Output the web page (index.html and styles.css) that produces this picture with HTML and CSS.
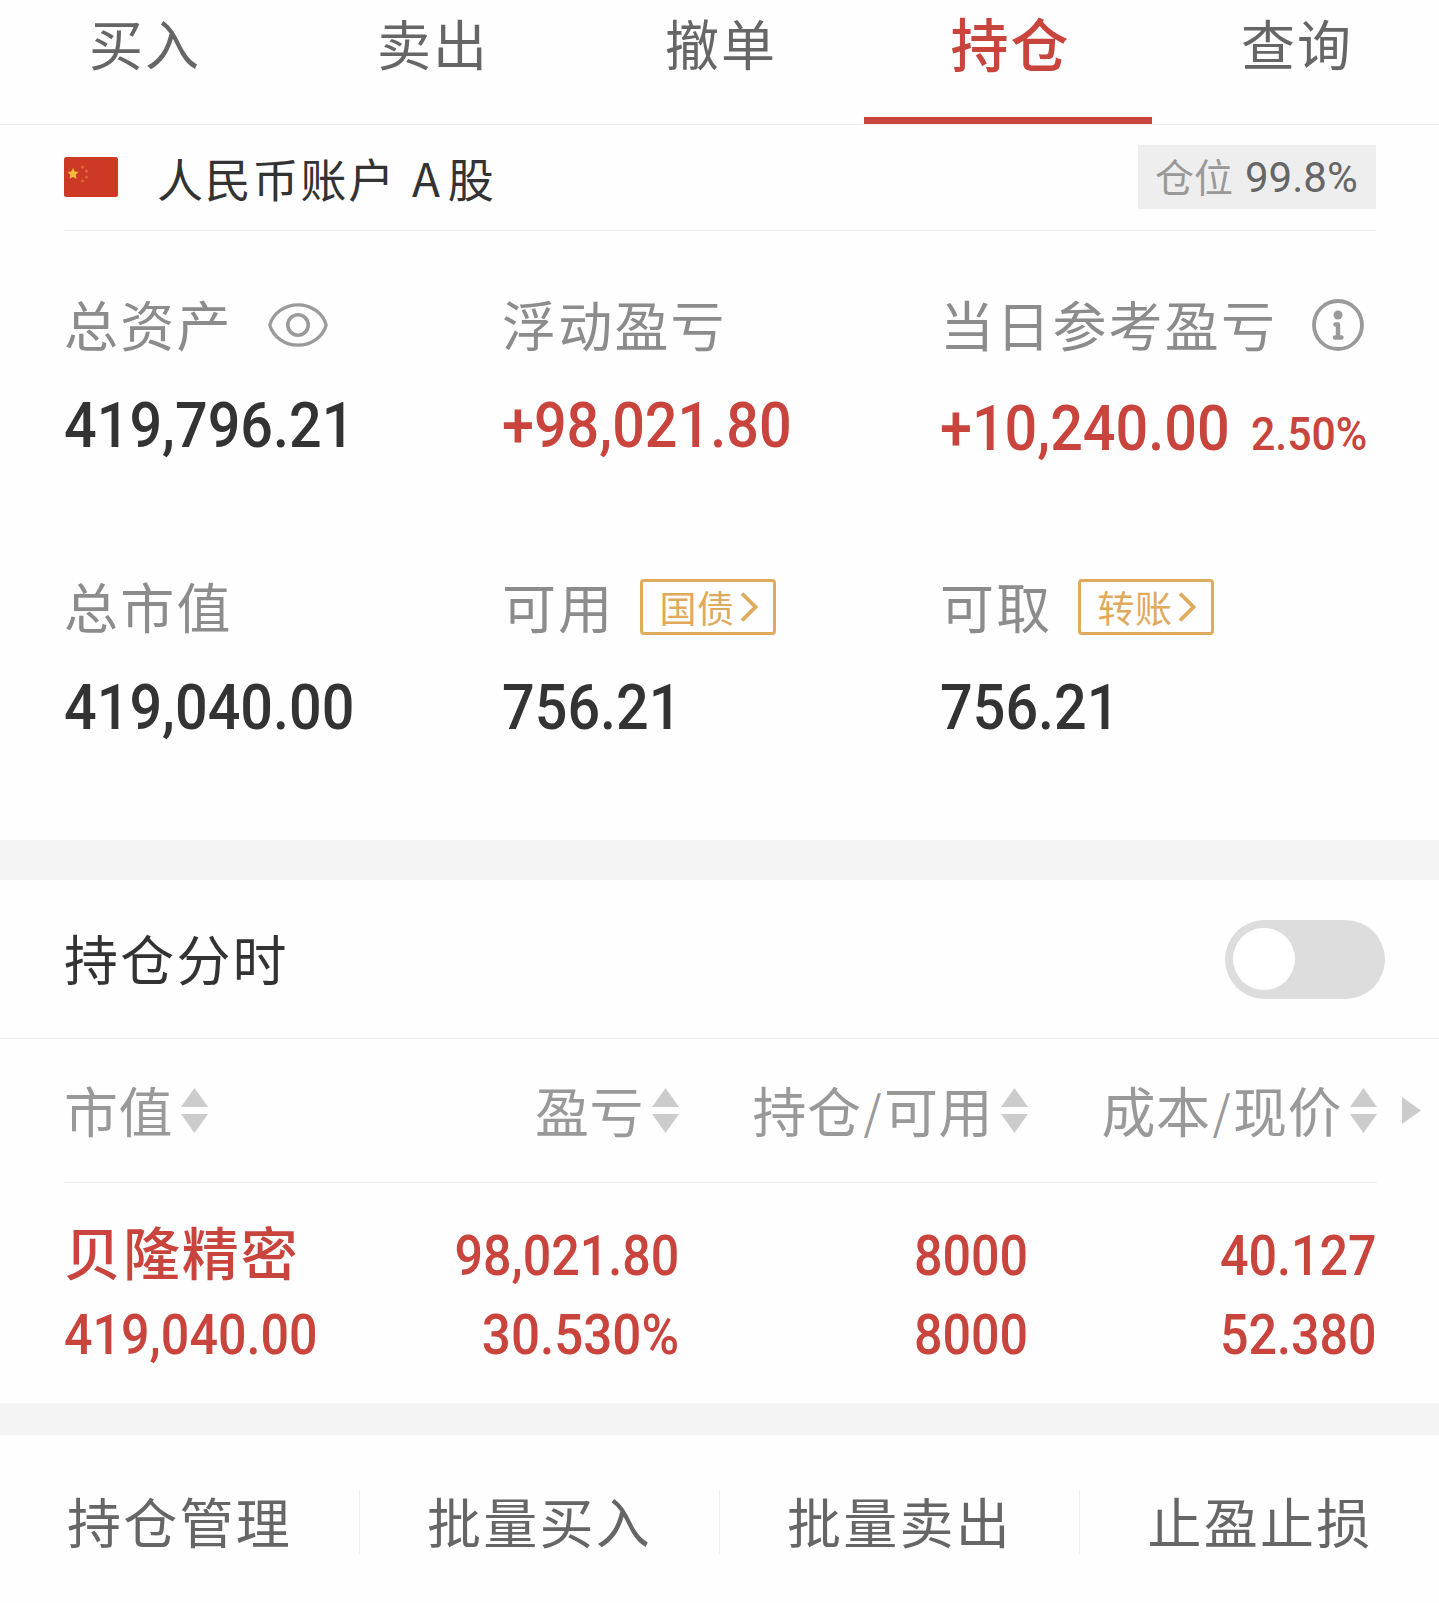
FILE: index.html
```html
<!DOCTYPE html>
<html lang="zh-CN">
<head>
<meta charset="utf-8">
<title>持仓</title>
<link rel="stylesheet" href="styles.css">
</head>
<body>
<svg width="0" height="0" class="defs" aria-hidden="true">
  <symbol id="sort" viewBox="0 0 27 45"><path d="M13.500 0 27 19H0zM0 26h27L13.500 45z" fill="currentColor"/></symbol>
  <symbol id="chevron" viewBox="0 0 18 30"><path d="M2 1.500 15.500 15 2 28.500" fill="none" stroke="currentColor" stroke-width="3.800"/></symbol>
</svg>

<nav class="tabs">
  <a class="tab">买入</a>
  <a class="tab">卖出</a>
  <a class="tab">撤单</a>
  <a class="tab active">持仓</a>
  <a class="tab">查询</a>
</nav>

<header class="account">
  <svg class="flag" viewBox="0 0 54 40">
    <rect width="54" height="40" rx="2.500" fill="#cc3a26"/>
    <path d="M9 11l1.700 3.600 3.900.5-2.900 2.700.8 4L9 19.900l-3.500 1.900.8-4L3.400 15.100l3.900-.5z" fill="#f6b93b"/>
    <g fill="#e0653a"><circle cx="18.500" cy="10" r="1.600"/><circle cx="22.500" cy="14" r="1.600"/><circle cx="22.500" cy="20" r="1.600"/><circle cx="18.500" cy="24" r="1.600"/></g>
  </svg>
  <h1 class="account-name">人民币账户<span class="latin">A</span>股</h1>
  <div class="position"><span class="position-label">仓位</span><span class="position-value">99.8%</span></div>
</header>

<section class="summary">
  <div class="stat">
    <div class="label">总资产
      <svg class="eye" viewBox="0 0 60 44" fill="none" stroke="#9a9a9a" stroke-width="3.200"><path d="M1.800 22C5 10 17 1.800 30 1.800S55 10 58.200 22C55 34 43 42.200 30 42.200S5 34 1.800 22z"/><circle cx="30" cy="22" r="10.200" stroke-width="3.600"/></svg>
    </div>
    <div class="value"><span class="num">419,796.21</span></div>
  </div>
  <div class="stat">
    <div class="label">浮动盈亏</div>
    <div class="value up"><span class="num">+98,021.80</span></div>
  </div>
  <div class="stat">
    <div class="label">当日参考盈亏
      <svg class="info" viewBox="0 0 52 52"><circle cx="26" cy="26" r="24" fill="none" stroke="#9a9a9a" stroke-width="3.800"/><circle cx="26" cy="16" r="4.500" fill="#9a9a9a"/><path d="M23.500 25.500H26V38M23 38.500h6.500" fill="none" stroke="#9a9a9a" stroke-width="4.400" stroke-linecap="round" stroke-linejoin="round"/></svg>
    </div>
    <div class="value up today"><span class="num">+10,240.00</span><span class="num rate">2.50%</span></div>
  </div>
  <div class="stat">
    <div class="label">总市值</div>
    <div class="value"><span class="num">419,040.00</span></div>
  </div>
  <div class="stat">
    <div class="label">可用 <a class="chip">国债<svg class="chevron"><use href="#chevron"/></svg></a></div>
    <div class="value"><span class="num">756.21</span></div>
  </div>
  <div class="stat">
    <div class="label">可取 <a class="chip">转账<svg class="chevron"><use href="#chevron"/></svg></a></div>
    <div class="value"><span class="num">756.21</span></div>
  </div>
</section>

<section class="intraday">
  <h2 class="intraday-title">持仓分时</h2>
  <div class="switch"><div class="knob"></div></div>
</section>

<section class="holdings">
  <div class="row head">
    <div class="cell">市值<svg class="sort"><use href="#sort"/></svg></div>
    <div class="cell">盈亏<svg class="sort"><use href="#sort"/></svg></div>
    <div class="cell">持仓<span class="slash">/</span>可用<svg class="sort"><use href="#sort"/></svg></div>
    <div class="cell">成本<span class="slash">/</span>现价<svg class="sort"><use href="#sort"/></svg></div>
    <svg class="more" viewBox="0 0 19 27"><path d="M0 0l19 13.500L0 27z" fill="#ccc"/></svg>
  </div>
  <div class="row item">
    <div class="cell"><span class="name">贝隆精密</span><span class="num">419,040.00</span></div>
    <div class="cell"><span class="num">98,021.80</span><span class="num percent">30.530%</span></div>
    <div class="cell"><span class="num">8000</span><span class="num">8000</span></div>
    <div class="cell"><span class="num">40.127</span><span class="num">52.380</span></div>
  </div>
</section>

<footer class="actions">
  <a class="action">持仓管理</a>
  <a class="action">批量买入</a>
  <a class="action">批量卖出</a>
  <a class="action">止盈止损</a>
</footer>
</body>
</html>
```
FILE: styles.css
```css
* { box-sizing: border-box; }

body {
  margin: 0;
  background: #fefefe;
  color: #333;
  font-family: "Noto Sans CJK SC", sans-serif;
  font-size: 54px;
}

h1, h2 { margin: 0; font-weight: 400; }
svg { display: block; flex: none; }
.defs { position: absolute; }

.tabs {
  display: grid;
  grid-template-columns: repeat(5, 288px);
  height: 125px;
  overflow: hidden;
  border-bottom: 1px solid #eee;
}
.tab {
  height: 124px;
  padding-left: 2px;
  line-height: 86px;
  letter-spacing: 2px;
  text-align: center;
  color: #666;
}
.tab.active {
  border-bottom: 7px solid #c9463f;
  padding-left: 5px;
  font-size: 58px;
  font-weight: 500;
  line-height: 84px;
  letter-spacing: 2px;
  color: #c8443c;
}

.account {
  display: flex;
  align-items: center;
  height: 106px;
  margin: 0 63px 0 64px;
  border-bottom: 1px solid #eee;
}
.flag { width: 54px; height: 40px; margin-top: -1px; }
.account-name {
  margin-left: 39px;
  font-size: 46px;
  line-height: 60px;
  letter-spacing: 1.800px;
  padding-bottom: 1px;
}
.latin { margin: 0 6px 0 16px; }
.position {
  display: flex;
  align-items: center;
  width: 238px;
  height: 64px;
  margin-left: auto;
  margin-top: -1px;
  padding-left: 17px;
  background: #eee;
  line-height: 60px;
}
.position-label { font-size: 39px; color: #999; padding-bottom: 4px; }
.position-value { margin: 2px 0 0 12px; font-family: Roboto, sans-serif; font-size: 42px; color: #666; }

.summary {
  display: grid;
  grid-template-columns: repeat(3, 438px);
  grid-template-rows: 282px 282px;
  height: 609px;
  padding: 64px 0 0 64px;
}
.label {
  display: flex;
  align-items: center;
  height: 60px;
  line-height: 54px;
  letter-spacing: 2.200px;
  padding-bottom: 3px;
  color: #8c8c8c;
  white-space: nowrap;
}
.eye { width: 60px; height: 44px; margin: 2px 0 0 35px; }
.info { width: 52px; height: 52px; margin: 2px 0 0 35px; }
.value { display: flex; margin-top: 34px; height: 74px; line-height: 74px; white-space: nowrap; }
.value.today { margin-top: 37px; align-items: baseline; }
.num {
  display: inline-block;
  font-family: Roboto, sans-serif;
  font-weight: 500;
  transform: scaleX(.913);
  transform-origin: left center;
}
.value .num { font-size: 63px; }
.value .rate { margin-left: -6px; font-size: 46px; transform: scaleX(.93); }
.up { color: #c8443c; }
.chip {
  display: flex;
  align-items: center;
  width: 136px;
  height: 56px;
  margin: 2px 0 0 26px;
  padding-left: 16px;
  border: 3px solid #e0aa5c;
  border-radius: 4px;
  font-size: 37px;
  line-height: 44px;
  letter-spacing: .5px;
  color: #e0aa5c;
}
.chevron { width: 18px; height: 30px; margin-left: 6px; }

.intraday {
  display: flex;
  align-items: center;
  justify-content: space-between;
  height: 199px;
  padding: 0 54px 0 64px;
  border-top: 40px solid #f4f4f4;
  border-bottom: 1px solid #eee;
}
.intraday-title { font-size: 54px; line-height: 60px; letter-spacing: 2.200px; padding-bottom: 2px; }
.switch { width: 160px; height: 79px; padding: 8px; border-radius: 40px; background: #ddd; }
.knob { width: 62px; height: 62px; border-radius: 50%; background: #fff; }

.holdings { padding: 0 62px 0 64px; height: 364px; }
.row { display: grid; grid-template-columns: 267px 348px 349px 349px; }
.head {
  position: relative;
  height: 144px;
  align-items: center;
  border-bottom: 1px solid #eee;
  color: #999;
}
.head .cell {
  display: flex;
  align-items: center;
  justify-content: flex-end;
  line-height: 60px;
  padding-bottom: 2px;
  letter-spacing: .5px;
}
.head .cell:first-child { justify-content: flex-start; }
.slash { font-size: 46px; margin: 0 2px; line-height: 56px; }
.sort { width: 27px; height: 45px; margin: 1px 0 0 8px; color: #ccc; }
.more { position: absolute; left: 1338px; top: 58px; width: 19px; height: 27px; }
.item { padding-top: 33px; color: #c8443c; }
.item .cell { display: flex; flex-direction: column; align-items: flex-end; white-space: nowrap; }
.item .cell:first-child { align-items: flex-start; }
.item .num { font-size: 55px; height: 79px; line-height: 80px; transform-origin: right center; }
.item .percent { transform: scaleX(.93); }
.item .cell:first-child .num { transform-origin: left center; }
.name { height: 79px; line-height: 68px; font-size: 57px; font-weight: 500; letter-spacing: 1.900px; }

.actions {
  display: grid;
  grid-template-columns: repeat(4, 360px);
  height: 200px;
  padding-top: 55px;
  overflow: hidden;
  border-top: 32px solid #f4f4f4;
}
.action {
  height: 64px;
  line-height: 62px;
  letter-spacing: 2.200px;
  text-align: center;
  color: #666;
}
.action:not(:last-child) { border-right: 1px solid #eee; }
```
